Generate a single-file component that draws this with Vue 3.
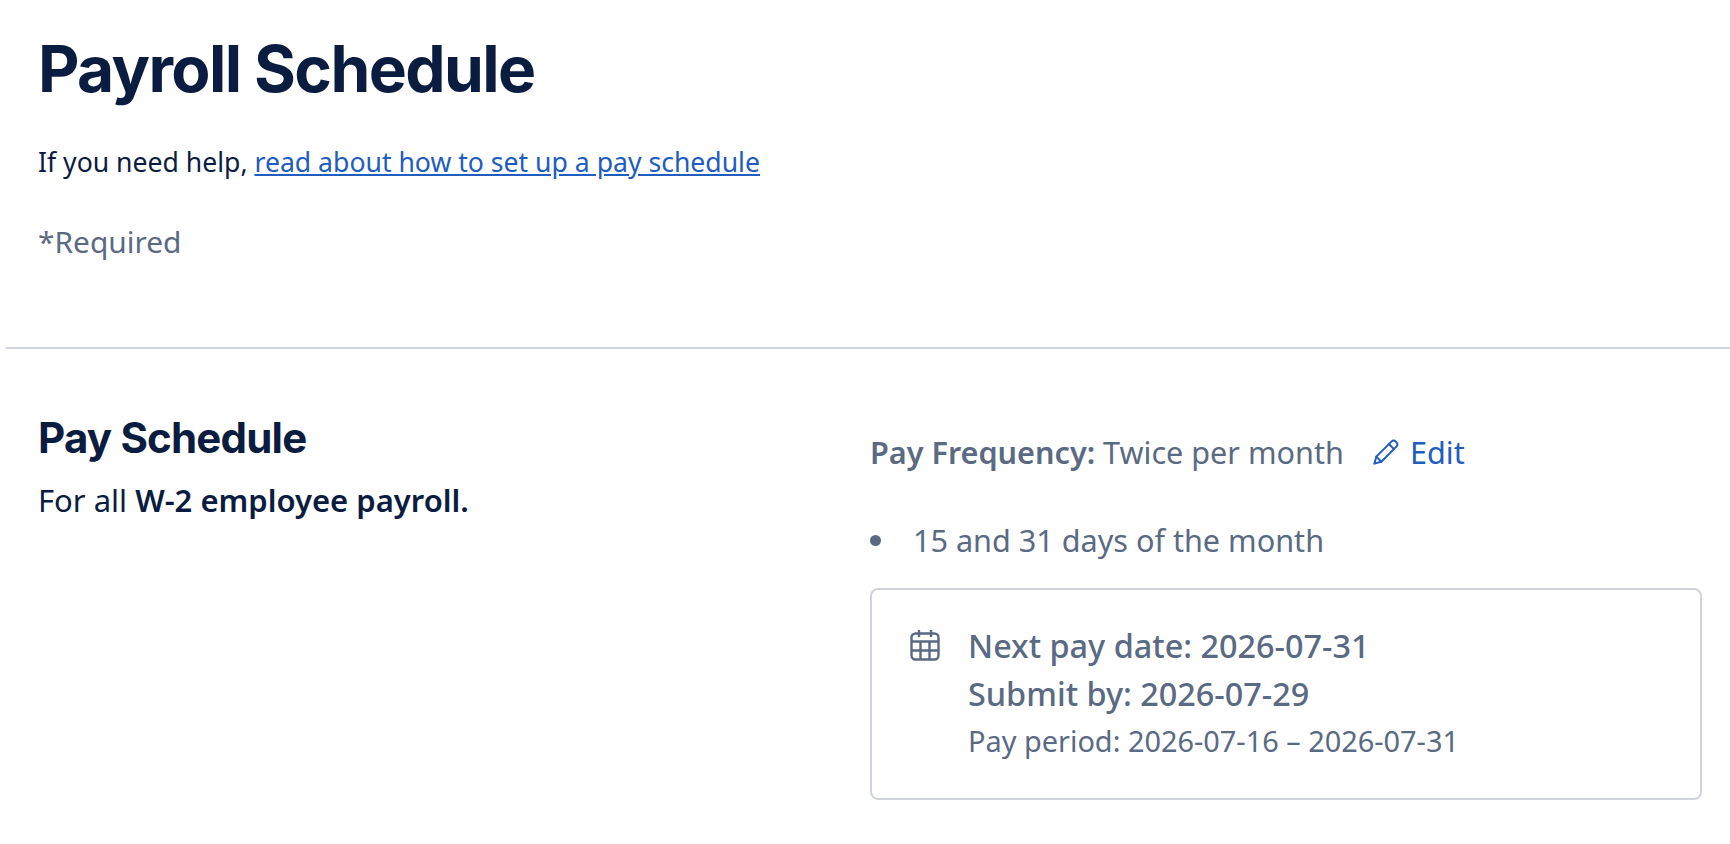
<script setup>
const title = 'Payroll Schedule'
</script>

<template>
  <main class="page">
    <header class="head">
      <h1 class="title">{{ title }}</h1>
      <p class="help">If you need help, <a class="link" href="#">read about how to set up a pay schedule</a></p>
      <p class="req">*Required</p>
    </header>
    <hr class="rule" />
    <section class="section">
      <div class="left">
        <h2 class="sub">Pay Schedule</h2>
        <p class="desc">For all <strong>W-2 employee payroll.</strong></p>
      </div>
      <div class="right">
        <div class="freq">
          <span><strong>Pay Frequency:</strong> Twice per month</span>
          <a class="edit" href="#">
            <svg class="pencil" viewBox="0 0 24 24" fill="none" stroke="currentColor" stroke-width="1.7" stroke-linejoin="round" stroke-linecap="round">
              <path d="M16.8 2.9a2.4 2.4 0 0 1 3.4 0l.9.9a2.4 2.4 0 0 1 0 3.4L8 20.3 2 22l1.7-6z" />
              <path d="M14.5 5.2l4.3 4.3M3.7 16l4.3 4.3" />
            </svg>
            Edit
          </a>
        </div>
        <ul class="list"><li class="item"><span class="dot"></span>15 and 31 days of the month</li></ul>
        <div class="card">
          <svg class="cal" viewBox="0 0 30 32" fill="none" stroke="currentColor" stroke-width="2.4" stroke-linejoin="round">
            <rect x="1.5" y="4.5" width="27" height="26" rx="4" />
            <path d="M1.5 12.5h27M1.5 21.5h27M10.5 12.5v18M19.5 12.5v18M9 1v7M21 1v7" />
          </svg>
          <div class="info">
            <div class="strong">Next pay date: 2026-07-31</div>
            <div class="strong">Submit by: 2026-07-29</div>
            <div class="small">Pay period: 2026-07-16 – 2026-07-31</div>
          </div>
        </div>
      </div>
    </section>
  </main>
</template>

<style scoped>
.page {
  width: 1730px;
  height: 844px;
  overflow: hidden;
  box-sizing: border-box;
  background: #fff;
  padding-left: 6px;
  font-family: "Noto Sans", sans-serif;
  color: #0a1c40;
}
.head { padding: 30px 0 0 32px; height: 347px; box-sizing: border-box; }
.title {
  margin: 0;
  font-family: Inter, sans-serif;
  font-size: 64px;
  line-height: 78px;
  font-weight: 700;
  letter-spacing: -1.6px;
  color: #0a1c40;
}
.help { margin: 36px 0 0; font-size: 26.6px; line-height: 36px; }
.link { color: #215cbf; text-decoration: underline; }
.req { margin: 44px 0 0; font-size: 29.9px; line-height: 36px; color: #5a6a83; }
.rule { margin: 0; border: 0; height: 2px; background: #d0d4da; }
.section { display: flex; padding: 63px 28px 0 32px; }
.left { width: 832px; flex: none; }
.sub {
  margin: 0;
  font-family: Inter, sans-serif;
  font-size: 42px;
  line-height: 52px;
  font-weight: 700;
  letter-spacing: -0.8px;
  color: #0a1c40;
}
.desc { margin: 18px 0 0; font-size: 31px; line-height: 36px; }
.desc strong { font-weight: 600; }
.right { flex: 1; color: #5a6a83; font-size: 30.6px; }
.freq { display: flex; align-items: center; gap: 28px; line-height: 40px; margin-top: 20px; }
.freq strong { font-weight: 600; }
.edit { display: flex; align-items: center; gap: 10px; color: #215cbf; text-decoration: none; }
.pencil { width: 28px; height: 28px; }
.list { list-style: none; margin: 48px 0 0; padding: 0; line-height: 40px; }
.item { display: flex; align-items: center; }
.dot { width: 11px; height: 11px; border-radius: 50%; background: #5a6a83; margin-right: 32px; flex: none; }
.card {
  margin-top: 28px;
  height: 212px;
  box-sizing: border-box;
  border: 2px solid #d0d4da;
  border-radius: 8px;
  padding: 31px 38px;
  display: flex;
  gap: 28px;
}
.cal { width: 30px; height: 32px; flex: none; margin-top: 8px; }
.strong { font-size: 32.4px; line-height: 48px; font-weight: 500; }
.small { font-size: 28.9px; line-height: 48px; }
</style>
